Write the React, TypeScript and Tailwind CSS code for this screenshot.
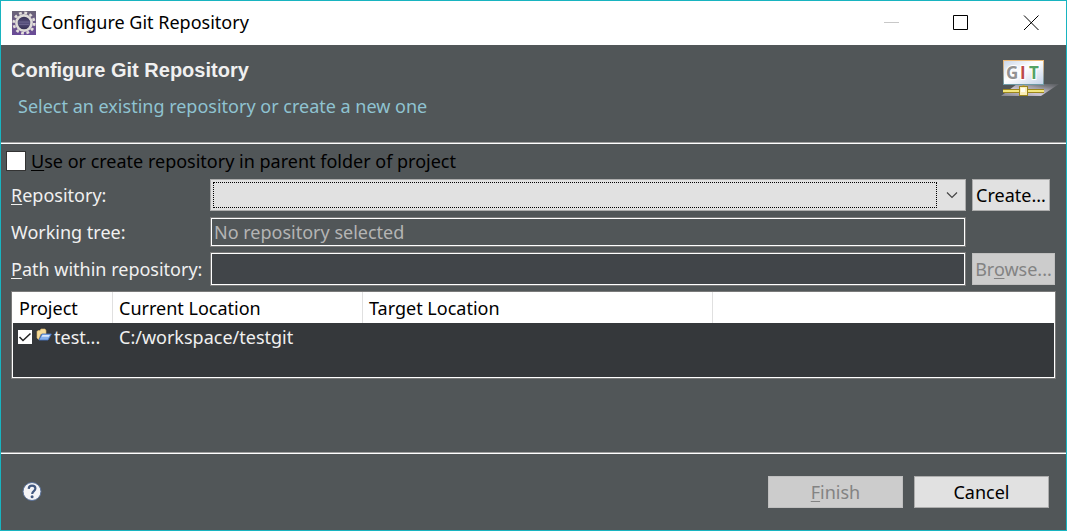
import { useState } from "react";

function EclipseIcon() {
  return (
    <svg width="24" height="24" viewBox="0 0 24 24" aria-hidden="true">
      <defs>
        <linearGradient id="gearBg" x1="0" y1="0" x2="0" y2="1">
          <stop offset="0" stopColor="#6b6478" />
          <stop offset="1" stopColor="#6a4a98" />
        </linearGradient>
        <linearGradient id="gearCore" x1="0" y1="0" x2="0" y2="1">
          <stop offset="0" stopColor="#302b4c" />
          <stop offset="0.5" stopColor="#57507e" />
          <stop offset="1" stopColor="#2b2647" />
        </linearGradient>
      </defs>
      <rect width="24" height="24" fill="url(#gearBg)" />
      <circle cx="12" cy="12" r="10.3" fill="none" stroke="#e4e0dc" strokeWidth="2.6" strokeDasharray="2.8 2.593" />
      <circle cx="12" cy="12" r="7.6" fill="url(#gearCore)" stroke="#dedbd8" strokeWidth="2.6" />
      <path d="M6.5 11h11M6.5 13.5h11" stroke="#77709a" strokeWidth="0.7" />
    </svg>
  );
}

function GitBanner() {
  return (
    <svg width="60" height="40" viewBox="0 0 60 40" aria-hidden="true">
      <defs>
        <linearGradient id="gitPanel" x1="0" y1="0" x2="1" y2="1">
          <stop offset="0" stopColor="#c9d5e8" />
          <stop offset="0.45" stopColor="#ffffff" />
          <stop offset="1" stopColor="#c3d1e8" />
        </linearGradient>
        <linearGradient id="gitEdge" x1="0" y1="0" x2="0" y2="1">
          <stop offset="0" stopColor="#e9b878" />
          <stop offset="0.5" stopColor="#b0a99a" />
          <stop offset="1" stopColor="#6d9aa6" />
        </linearGradient>
        <linearGradient id="gitShadow" x1="0" y1="1" x2="1" y2="0">
          <stop offset="0" stopColor="#c9c2cf" stopOpacity="0.4" />
          <stop offset="0.4" stopColor="#cdc6d4" />
          <stop offset="0.65" stopColor="#c1bbc7" stopOpacity="0.7" />
          <stop offset="1" stopColor="#7f7f88" stopOpacity="0.2" />
        </linearGradient>
      </defs>
      <path d="M1 38 L17 26 H59 L41 38 Z" fill="url(#gitShadow)" />
      <rect x="3.5" y="2.5" width="40" height="24" fill="url(#gitPanel)" stroke="url(#gitEdge)" />
      <g className="font-['Open_Sans',sans-serif] text-[17px] font-bold" stroke="#ffffff" strokeWidth="2" paintOrder="stroke">
        <text x="6" y="21" fill="#929292">G</text>
        <text x="20" y="21" fill="#bd4a4a">I</text>
        <text x="29" y="21" fill="#55a366">T</text>
      </g>
      <path d="M23.5 27v3" stroke="#c4a83c" strokeWidth="2" />
      <rect x="3" y="31" width="41" height="4" fill="#9c861c" />
      <rect x="3" y="32" width="41" height="2" fill="#f2e67c" />
      <rect x="19.5" y="28.5" width="8" height="9" fill="#fbeeb8" stroke="#9c861c" />
      <rect x="21" y="30" width="4" height="4" fill="#fffdf0" />
    </svg>
  );
}

function FolderIcon() {
  return (
    <svg width="16" height="14" viewBox="0 0 16 14" aria-hidden="true">
      <path d="M1 3.5 L2 2.5 H4 L5 1 H9 L10 2.5 V6 H5 L2.5 11.5 L1 10 Z" fill="#f6dc98" stroke="#d9b46c" strokeWidth="0.6" />
      <path d="M3 12 L6 6 H15.3 L12 12 Z" fill="#86b0ec" stroke="#4a7ac8" strokeWidth="0.8" />
      <path d="M6.5 7h7.3l-1 1.8H5.6z" fill="#d9e8fc" />
    </svg>
  );
}

const buttonClass =
  "h-8 whitespace-nowrap border border-[#adadad] bg-[#e1e1e1] text-black disabled:border-[#bfbfbf] disabled:bg-[#cccccc] disabled:text-[#838383]";
const fieldClass = "w-full border border-[#7a7a7a] px-[3px] shadow-[inset_0_0_0_1px_#ffffff] outline-none";

export default function App() {
  const [useParent, setUseParent] = useState(false);
  const [selected, setSelected] = useState(true);
  const [path, setPath] = useState("");

  return (
    <main className="flex min-h-screen flex-col border border-[#18b4c0] bg-[#515658] font-['Noto_Sans',sans-serif] text-[18px] leading-6 text-[#f0f0f0]">
      <div className="flex h-11 items-center bg-white pl-[11px] text-black">
        <EclipseIcon />
        <span className="ml-[5px] flex-1 pb-0.5">Configure Git Repository</span>
        <button aria-label="Minimize" disabled className="grid h-11 w-[70px] place-items-center">
          <svg width="16" height="16" viewBox="0 0 16 16" stroke="#c8c8c8">
            <path d="M1 7.5h15" />
          </svg>
        </button>
        <button aria-label="Maximize" className="grid h-11 w-[70px] place-items-center">
          <svg width="16" height="16" viewBox="0 0 16 16" fill="none" stroke="#000">
            <path d="M.5 .5h14v14H.5z" />
          </svg>
        </button>
        <button aria-label="Close" className="grid h-11 w-[70px] place-items-center">
          <svg width="16" height="16" viewBox="0 0 16 16" stroke="#000">
            <path d="M1 .5l14.5 14.5M15.5 .5l-14.5 14.5" />
          </svg>
        </button>
      </div>

      <header className="flex h-[99px] justify-between border-b border-white pl-2.5 pr-[6px] pt-[13px] shadow-[inset_0_-1px_0_#a0a0a0]">
        <div>
          <h1 className="font-['Liberation_Sans',sans-serif] text-[20px] font-bold">Configure Git Repository</h1>
          <p className="ml-[7px] mt-3 text-[#8fc3d1]">Select an existing repository or create a new one</p>
        </div>
        <GitBanner />
      </header>

      <section className="flex-1 px-2.5 pt-[5px]">
        <label className="-ml-[5px] flex h-6 items-center gap-[5px] text-black">
          <input
            type="checkbox"
            checked={useParent}
            onChange={(e) => setUseParent(e.target.checked)}
            className="size-5 appearance-none border border-[#333333] bg-white checked:bg-[#333333]"
          />
          <span>
            <u className="underline-offset-2">U</u>se or create repository in parent folder of project
          </span>
        </label>

        <div className="mt-1.5 grid auto-rows-[32px] grid-cols-[199px_1fr_90px] items-center gap-y-[5px]">
          <label htmlFor="repository">
            <u className="underline-offset-2">R</u>epository:
          </label>
          <div className="relative">
            <select
              id="repository"
              className="block h-8 w-full appearance-none border border-[#adadad] bg-[#e1e1e1] px-2 text-black outline-none"
            >
              <option value=""></option>
            </select>
            <span className="pointer-events-none absolute inset-y-[3px] left-[3px] right-[29px] border border-dotted border-black" />
            <svg className="pointer-events-none absolute right-2 top-3 h-2 w-3" viewBox="0 0 12 8" fill="none" stroke="#444">
              <path d="M1 1.5l5 5 5-5" strokeWidth="1.2" />
            </svg>
          </div>
          <button className={`${buttonClass} ml-1.5 w-[78px]`}>Create...</button>

          <label htmlFor="tree">Working tree:</label>
          <input
            id="tree"
            readOnly
            value="No repository selected"
            className={`${fieldClass} h-[30px] bg-[#515658] text-[#b4b4b4]`}
          />
          <span />

          <label htmlFor="path">
            <u className="underline-offset-2">P</u>ath within repository:
          </label>
          <input
            id="path"
            value={path}
            onChange={(e) => setPath(e.target.value)}
            className={`${fieldClass} h-[34px] bg-[#414549]`}
          />
          <button disabled className={`${buttonClass} ml-1.5 w-[83px]`}>
            Br<u className="underline-offset-2">o</u>wse...
          </button>
        </div>

        <div className="mt-1.5 h-[88px] border border-[#7a7a7a] bg-[#35383b] shadow-[inset_0_0_0_1px_#ffffff]">
          <table className="w-full table-fixed border-separate border-spacing-0 text-left">
            <thead>
              <tr className="h-[31px] bg-white text-black">
                <th className="w-[101px] border-r border-[#e0e0e0] p-0 pl-[7px] font-normal">Project</th>
                <th className="w-[250px] border-r border-[#e0e0e0] p-0 pl-1.5 font-normal">Current Location</th>
                <th className="w-[350px] border-r border-[#e0e0e0] p-0 pl-1.5 font-normal">Target Location</th>
                <th />
              </tr>
            </thead>
            <tbody>
              <tr className="h-7">
                <td className="p-0 pl-1.5">
                  <label className="flex items-center">
                    <input
                      type="checkbox"
                      checked={selected}
                      onChange={(e) => setSelected(e.target.checked)}
                      className="peer size-3.5 appearance-none bg-white"
                    />
                    <svg
                      className="pointer-events-none invisible -ml-3.5 size-3.5 peer-checked:visible"
                      viewBox="0 0 14 14"
                      fill="none"
                      stroke="#222"
                      strokeWidth="1.5"
                    >
                      <path d="M1.5 7l3.5 3.5L12.5 3.5" />
                    </svg>
                    <span className="-mt-1 ml-1 mr-0.5">
                      <FolderIcon />
                    </span>
                    test...
                  </label>
                </td>
                <td className="p-0 pl-1.5">C:/workspace/testgit</td>
                <td />
                <td />
              </tr>
            </tbody>
          </table>
        </div>
      </section>

      <footer className="flex h-[78px] items-center justify-between border-t border-[#a0a0a0] pl-[21px] pr-[17px] shadow-[inset_0_1px_0_#ffffff]">
        <button aria-label="Help">
          <svg width="20" height="20" viewBox="0 0 20 20">
            <circle cx="10" cy="9.5" r="9" fill="#f4f4f6" stroke="#5a7199" />
            <path d="M6.7 6.9C6.9 4.5 8.2 3.7 10 3.7c2 0 3.4 1.1 3.4 2.9 0 2.6-3.2 2.5-3.2 5.3" fill="none" stroke="#42587f" strokeWidth="2.2" />
            <circle cx="10.1" cy="14.7" r="1.5" fill="#42587f" />
          </svg>
        </button>
        <div className="flex gap-[11px]">
          <button disabled className={`${buttonClass} w-[135px]`}>
            <u className="underline-offset-2">F</u>inish
          </button>
          <button className={`${buttonClass} w-[135px]`}>Cancel</button>
        </div>
      </footer>
    </main>
  );
}
